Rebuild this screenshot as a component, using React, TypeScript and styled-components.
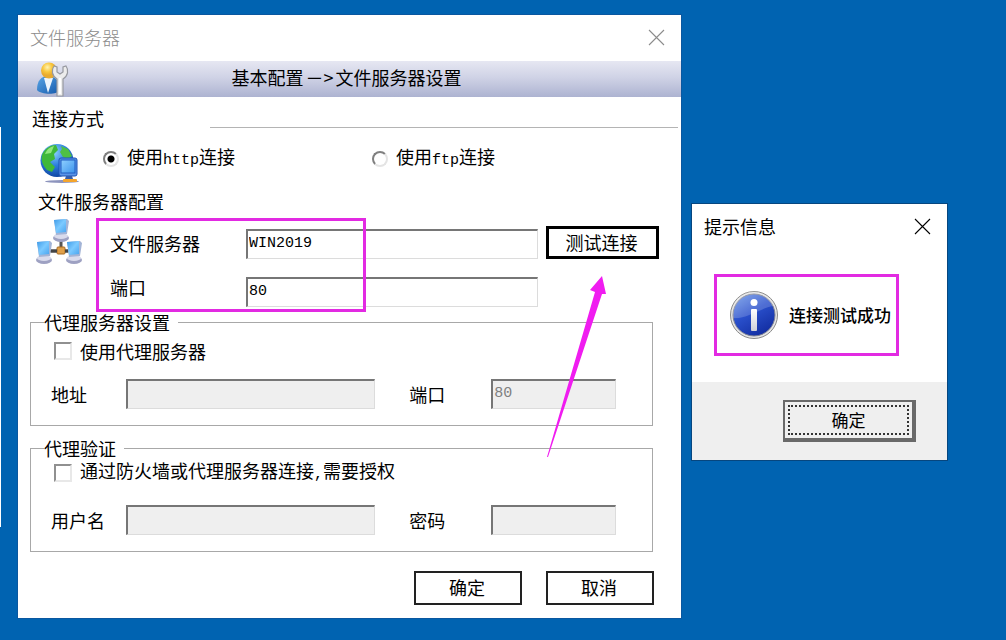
import React from 'react';
import styled, { createGlobalStyle, css } from 'styled-components';

const cjk = '"Noto Sans CJK SC", "Liberation Sans", sans-serif';
const mono = '"Liberation Mono", "Noto Sans CJK SC", monospace';
const accent = '#e22ae2';

const GlobalStyle = createGlobalStyle`
  *, *::before, *::after { box-sizing: border-box; }
  body { margin: 0; background: #0063b1; }
  button, input { font: inherit; color: inherit; margin: 0; border-radius: 0; }
`;

const Desktop = styled.main`
  position: relative;
  display: flex;
  align-items: flex-start;
  gap: 11px;
  min-height: 100vh;
  padding: 15px 59px 20px 18px;
  background: #0063b1;
  color: #000;
  font-family: ${cjk};
  font-size: 18px;
  line-height: 20px;
`;

const BackWindowEdge = styled.div`
  position: absolute;
  left: 0;
  top: 127px;
  width: 1px;
  height: 400px;
  background: #fff;
`;

const Window = styled.section`
  flex: 1;
  min-width: 600px;
  background: #fff;
  box-shadow: 0 0 0 1px #0a57a0;
`;

const TitleBar = styled.header<{ $muted?: boolean }>`
  display: flex;
  align-items: center;
  justify-content: space-between;
  height: 46px;
  padding: 0 16px 2px 12px;
  color: ${p => (p.$muted ? '#8c8c8c' : '#000')};
  font-weight: ${p => (p.$muted ? 300 : 400)};
`;

const Title = styled.h1`
  margin: 0;
  font-size: 18px;
  font-weight: inherit;
`;

const CloseButton = styled.button`
  display: flex;
  padding: 0;
  border: 0;
  background: none;
`;

const Banner = styled.div`
  display: flex;
  align-items: center;
  height: 36px;
  padding: 0 59px 0 17px;
  background: linear-gradient(#e6e7f2, #d0d3e6 45%, #adb3d1);
`;

const BannerTitle = styled.h2`
  flex: 1;
  margin: 0;
  padding-bottom: 4px;
  font-size: 18px;
  font-weight: 400;
  text-align: center;
`;

const Arrow = styled.span`
  padding: 0 2px;
`;

const Latin = styled.span`
  font-family: ${mono};
  font-size: 15px;
`;

const SectionHead = styled.div`
  display: grid;
  grid-template-columns: 178px 1fr;
  padding: 11px 3px 2px 14px;
`;

const SectionTitle = styled.h3<{ $indent?: boolean }>`
  margin: ${p => (p.$indent ? '7px 0 4px 20px' : '0')};
  font-size: 18px;
  font-weight: 400;
`;

const Rule = styled.div`
  align-self: end;
  border-top: 1px solid #b4b4b4;
`;

const Methods = styled.div`
  display: grid;
  grid-template-columns: 64px 269px 1fr;
  padding: 12px 0 0 21px;
`;

const Choice = styled.label`
  display: flex;
  align-items: center;
  align-self: start;
  gap: 8px;
  padding-top: 4px;
`;

const Radio = styled.input.attrs({ type: 'radio' })`
  appearance: none;
  width: 16px;
  height: 16px;
  border: 2px solid;
  border-color: #808080 #e4e4e4 #e4e4e4 #808080;
  border-radius: 50%;
  background: #fff;
  &:checked { background: radial-gradient(circle, #000 3px, #fff 4px); }
`;

const Check = styled.input.attrs({ type: 'checkbox' })`
  appearance: none;
  width: 18px;
  height: 18px;
  border: 2px solid;
  border-color: #909090 #e8e8e8 #e8e8e8 #909090;
  background: #fff;
`;

const Server = styled.div`
  position: relative;
  display: flex;
  align-items: flex-start;
  padding: 3px 22px 0 18px;
`;

const ServerGrid = styled.div`
  flex: 1;
  display: grid;
  grid-template-columns: 128px 1fr 113px;
  gap: 18px 8px;
  padding: 8px 0 0 26px;
`;

const FieldLabel = styled.label<{ $top?: boolean; $gap?: boolean }>`
  align-self: ${p => (p.$top ? 'start' : 'center')};
  padding-left: ${p => (p.$gap ? '34px' : '0')};
`;

const Field = styled.input`
  align-self: end;
  width: 100%;
  min-width: 0;
  height: 30px;
  padding: 0 0 2px 1px;
  border: solid;
  border-width: 2px 1px 1px 2px;
  border-color: #767676 #dcdcdc #dcdcdc #767676;
  background: #fff;
  font-family: ${mono};
  font-size: 15px;
  &:disabled { background: #efefef; color: #808080; }
`;

const TestCell = styled.div`
  position: relative;
`;

const PushButton = styled.button<{ $focused?: boolean }>`
  width: ${p => (p.$focused ? '113px' : '108px')};
  height: ${p => (p.$focused ? '33px' : '34px')};
  padding: 0 2px 2px 0;
  border: ${p => (p.$focused ? '3px' : '2px')} solid ${p => (p.$focused ? '#000' : '#222')};
  background: #fff;
`;

const highlight = css`
  border: 3px solid ${accent};
`;

const FieldsHighlight = styled.div`
  ${highlight}
  position: absolute;
  left: 78px;
  top: 3px;
  width: 270px;
  height: 94px;
  pointer-events: none;
`;

const PointerArrow = styled.svg`
  position: absolute;
  left: 0;
  top: 50px;
  pointer-events: none;
`;

const Group = styled.fieldset<{ $tight?: boolean }>`
  min-width: 0;
  margin: ${p => (p.$tight ? '12px' : '5px')} 28px 0 12px;
  padding: ${p => (p.$tight ? '2px 36px 16px 20px' : '9px 36px 16px 20px')};
  border: 1px solid #a8a8a8;
`;

const Legend = styled.legend`
  margin-left: -7px;
  padding: 0 8px 0 0;
`;

const CheckRow = styled.label`
  display: flex;
  align-items: center;
  gap: 8px;
  padding-left: 3px;
`;

const Fields = styled.div<{ $loose?: boolean }>`
  display: grid;
  grid-template-columns: 75px 2fr 116px 1fr;
  margin-top: ${p => (p.$loose ? '20px' : '18px')};
`;

const Actions = styled.footer`
  display: flex;
  justify-content: flex-end;
  gap: 24px;
  padding: 19px 27px 13px;
`;

const Dialog = styled.section`
  flex: 0 0 255px;
  margin-top: 189px;
  background: #fff;
  box-shadow: 0 0 0 1px #06467f;
`;

const DialogBody = styled.div`
  padding: 24px 48px 26px 22px;
`;

const Message = styled.div`
  ${highlight}
  display: flex;
  align-items: center;
  gap: 10px;
  height: 82px;
  padding-left: 12px;
  font-size: 17px;
  font-weight: 500;
  white-space: nowrap;
`;

const DialogFooter = styled.footer`
  display: flex;
  justify-content: flex-end;
  padding: 18px 31px;
  background: #efefef;
`;

const ConfirmButton = styled.button`
  width: 133px;
  height: 42px;
  padding: 3px;
  border: solid #696969;
  border-width: 2px 4px 4px 2px;
  background: #efefef;
  font-size: 17px;
`;

const FocusRing = styled.span`
  display: flex;
  align-items: center;
  justify-content: center;
  height: 100%;
  border: 2px dotted #333;
`;

function CloseIcon() {
  return (
    <svg width="17" height="17" viewBox="0 0 17 17" stroke="currentColor" strokeWidth="1.1">
      <path d="M1 1 16 16M16 1 1 16" />
    </svg>
  );
}

function UserToolIcon() {
  return (
    <svg width="36" height="36" viewBox="0 0 36 36">
      <defs>
        <radialGradient id="head" cx=".4" cy=".3">
          <stop offset="0" stopColor="#fff3b0" />
          <stop offset=".6" stopColor="#f8c63c" />
          <stop offset="1" stopColor="#e8aa30" />
        </radialGradient>
        <linearGradient id="torso" x2="1" y2="1">
          <stop offset="0" stopColor="#5aa6e6" />
          <stop offset="1" stopColor="#1459ac" />
        </linearGradient>
      </defs>
      <path d="M2 29C2 20 6 15 13 15s12 5 12 14c-2 5-19 5-23 0Z" fill="url(#torso)" />
      <path d="m9 17 4 15 5-15Z" fill="#eef5fc" />
      <circle cx="14" cy="9.500" r="8" fill="url(#head)" />
      <path d="M19 5c-3 4-2 10 3 13v17h6V18c5-3 6-9 3-13l-3 1v5l-3 2-3-2V6Z" fill="#ececec" stroke="#96989f" strokeWidth="1.200" />
      <path d="M25 17v16" stroke="#fff" strokeWidth="2" />
    </svg>
  );
}

function GlobeIcon() {
  return (
    <svg width="42" height="42" viewBox="0 0 42 42">
      <defs>
        <radialGradient id="sea" cx=".4" cy=".25" r=".8">
          <stop offset="0" stopColor="#8fd4ff" />
          <stop offset=".5" stopColor="#2d7fdc" />
          <stop offset="1" stopColor="#0c3f9c" />
        </radialGradient>
        <linearGradient id="glass" x2="1" y2="1">
          <stop offset="0" stopColor="#8fd0ff" />
          <stop offset="1" stopColor="#3c93ec" />
        </linearGradient>
      </defs>
      <ellipse cx="23" cy="39.500" rx="17" ry="1.500" fill="#8d94bd" />
      <circle cx="18" cy="18.500" r="16.500" fill="url(#sea)" />
      <path d="M3 13C6 6 12 3 17 3l2 5-4 4 1 5-5 3 5 5-3 5-5-2c-5-5-6-11-5-15Z" fill="#3fb83a" />
      <path d="m22 4 7 3 4 7-4 3-5-2-3-5 2-3Z" fill="#4fc044" />
      <path d="M6 12c2-5 5-7 9-8l-3 7Z" fill="#8fe67c" />
      <rect x="20" y="16" width="18" height="18" rx="2" fill="#5b95e8" stroke="#1c52b4" />
      <rect x="22" y="18" width="14" height="13" fill="url(#glass)" stroke="#1f5cc0" />
      <path d="M27 34h6l1 3h-8Z" fill="#365dab" />
      <rect x="24" y="37" width="14" height="3" rx="1" fill="#f4a52c" />
    </svg>
  );
}

function Computer({ x, y }: { x: number; y: number }) {
  return (
    <g transform={`translate(${x} ${y})`}>
      <ellipse cx="8" cy="19" rx="8" ry="4" fill="#9ea1c2" />
      <ellipse cx="8" cy="17" rx="7" ry="3" fill="#d9dbec" />
      <path d="M1 1 14 0l2 2-2 13-11 1Z" fill="#a3b4d6" />
      <path d="m1 1 12-1v13L3 14Z" fill="url(#screen)" />
    </g>
  );
}

function NetworkIcon() {
  return (
    <svg width="48" height="48" viewBox="0 0 48 48">
      <defs>
        <linearGradient id="screen" x2="1" y2="1">
          <stop offset="0" stopColor="#3d9ae8" />
          <stop offset=".5" stopColor="#7ccaff" />
          <stop offset="1" stopColor="#4aa5f0" />
        </linearGradient>
      </defs>
      <path d="M25 20v12M14 33h22" stroke="#555" strokeWidth="3" />
      <Computer x={17} y={1} />
      <Computer x={0} y={23} />
      <Computer x={30} y={23} />
      <rect x="21" y="29" width="8" height="7" rx="1" fill="#e0a04a" stroke="#a96c22" />
      <path d="M15 33h6M29 33h3" stroke="#444" strokeWidth="3" />
    </svg>
  );
}

function InfoIcon() {
  return (
    <svg width="50" height="50" viewBox="0 0 50 50">
      <defs>
        <linearGradient id="ball" x2=".6" y2="1">
          <stop offset="0" stopColor="#6f9ae8" />
          <stop offset=".5" stopColor="#2a50cc" />
          <stop offset="1" stopColor="#1430a4" />
        </linearGradient>
        <linearGradient id="stem" x2="0" y2="1">
          <stop offset="0" stopColor="#fff" />
          <stop offset="1" stopColor="#cfd0d8" />
        </linearGradient>
      </defs>
      <circle cx="25" cy="25" r="23.500" fill="#e6e6e6" stroke="#8a8a8a" />
      <circle cx="25" cy="25" r="21" fill="url(#ball)" stroke="#808494" />
      <path d="M4.500 28A20.500 20.500 0 0 1 44 16C34 17 18 29 4.500 28Z" fill="#fff" opacity=".18" />
      <circle cx="25" cy="12.500" r="3.500" fill="#fff" />
      <rect x="22" y="19" width="6" height="22" rx="1" fill="url(#stem)" />
    </svg>
  );
}

export default function App() {
  return (
    <>
      <GlobalStyle />
      <Desktop>
        <BackWindowEdge />
        <Window>
          <TitleBar $muted>
            <Title>文件服务器</Title>
            <CloseButton aria-label="关闭"><CloseIcon /></CloseButton>
          </TitleBar>
          <Banner>
            <UserToolIcon />
            <BannerTitle>基本配置<Arrow>－&gt;</Arrow>文件服务器设置</BannerTitle>
          </Banner>

          <SectionHead>
            <SectionTitle>连接方式</SectionTitle>
            <Rule />
          </SectionHead>
          <Methods>
            <GlobeIcon />
            <Choice>
              <Radio name="method" defaultChecked />
              <span>使用<Latin>http</Latin>连接</span>
            </Choice>
            <Choice>
              <Radio name="method" />
              <span>使用<Latin>ftp</Latin>连接</span>
            </Choice>
          </Methods>

          <SectionTitle $indent>文件服务器配置</SectionTitle>
          <Server>
            <NetworkIcon />
            <ServerGrid>
              <FieldLabel htmlFor="server">文件服务器</FieldLabel>
              <Field id="server" defaultValue="WIN2019" />
              <TestCell>
                <PushButton $focused>测试连接</PushButton>
                <PointerArrow width="62" height="182" viewBox="0 0 62 182">
                  <path d="M56 0 44 14l5 2L1 181l1 0L56 18l4 0Z" fill="#f01cf0" />
                </PointerArrow>
              </TestCell>
              <FieldLabel htmlFor="port" $top>端口</FieldLabel>
              <Field id="port" defaultValue="80" />
            </ServerGrid>
            <FieldsHighlight />
          </Server>

          <Group>
            <Legend>代理服务器设置</Legend>
            <CheckRow><Check />使用代理服务器</CheckRow>
            <Fields>
              <FieldLabel htmlFor="proxy">地址</FieldLabel>
              <Field id="proxy" disabled />
              <FieldLabel htmlFor="proxy-port" $gap>端口</FieldLabel>
              <Field id="proxy-port" defaultValue="80" disabled />
            </Fields>
          </Group>

          <Group $tight>
            <Legend>代理验证</Legend>
            <CheckRow>
              <Check />
              <span>通过防火墙或代理服务器连接<Latin>,</Latin>需要授权</span>
            </CheckRow>
            <Fields $loose>
              <FieldLabel htmlFor="user">用户名</FieldLabel>
              <Field id="user" disabled />
              <FieldLabel htmlFor="password" $gap>密码</FieldLabel>
              <Field id="password" type="password" disabled />
            </Fields>
          </Group>

          <Actions>
            <PushButton>确定</PushButton>
            <PushButton>取消</PushButton>
          </Actions>
        </Window>

        <Dialog role="dialog" aria-label="提示信息">
          <TitleBar>
            <Title>提示信息</Title>
            <CloseButton aria-label="关闭"><CloseIcon /></CloseButton>
          </TitleBar>
          <DialogBody>
            <Message><InfoIcon />连接测试成功</Message>
          </DialogBody>
          <DialogFooter>
            <ConfirmButton><FocusRing>确定</FocusRing></ConfirmButton>
          </DialogFooter>
        </Dialog>
      </Desktop>
    </>
  );
}
